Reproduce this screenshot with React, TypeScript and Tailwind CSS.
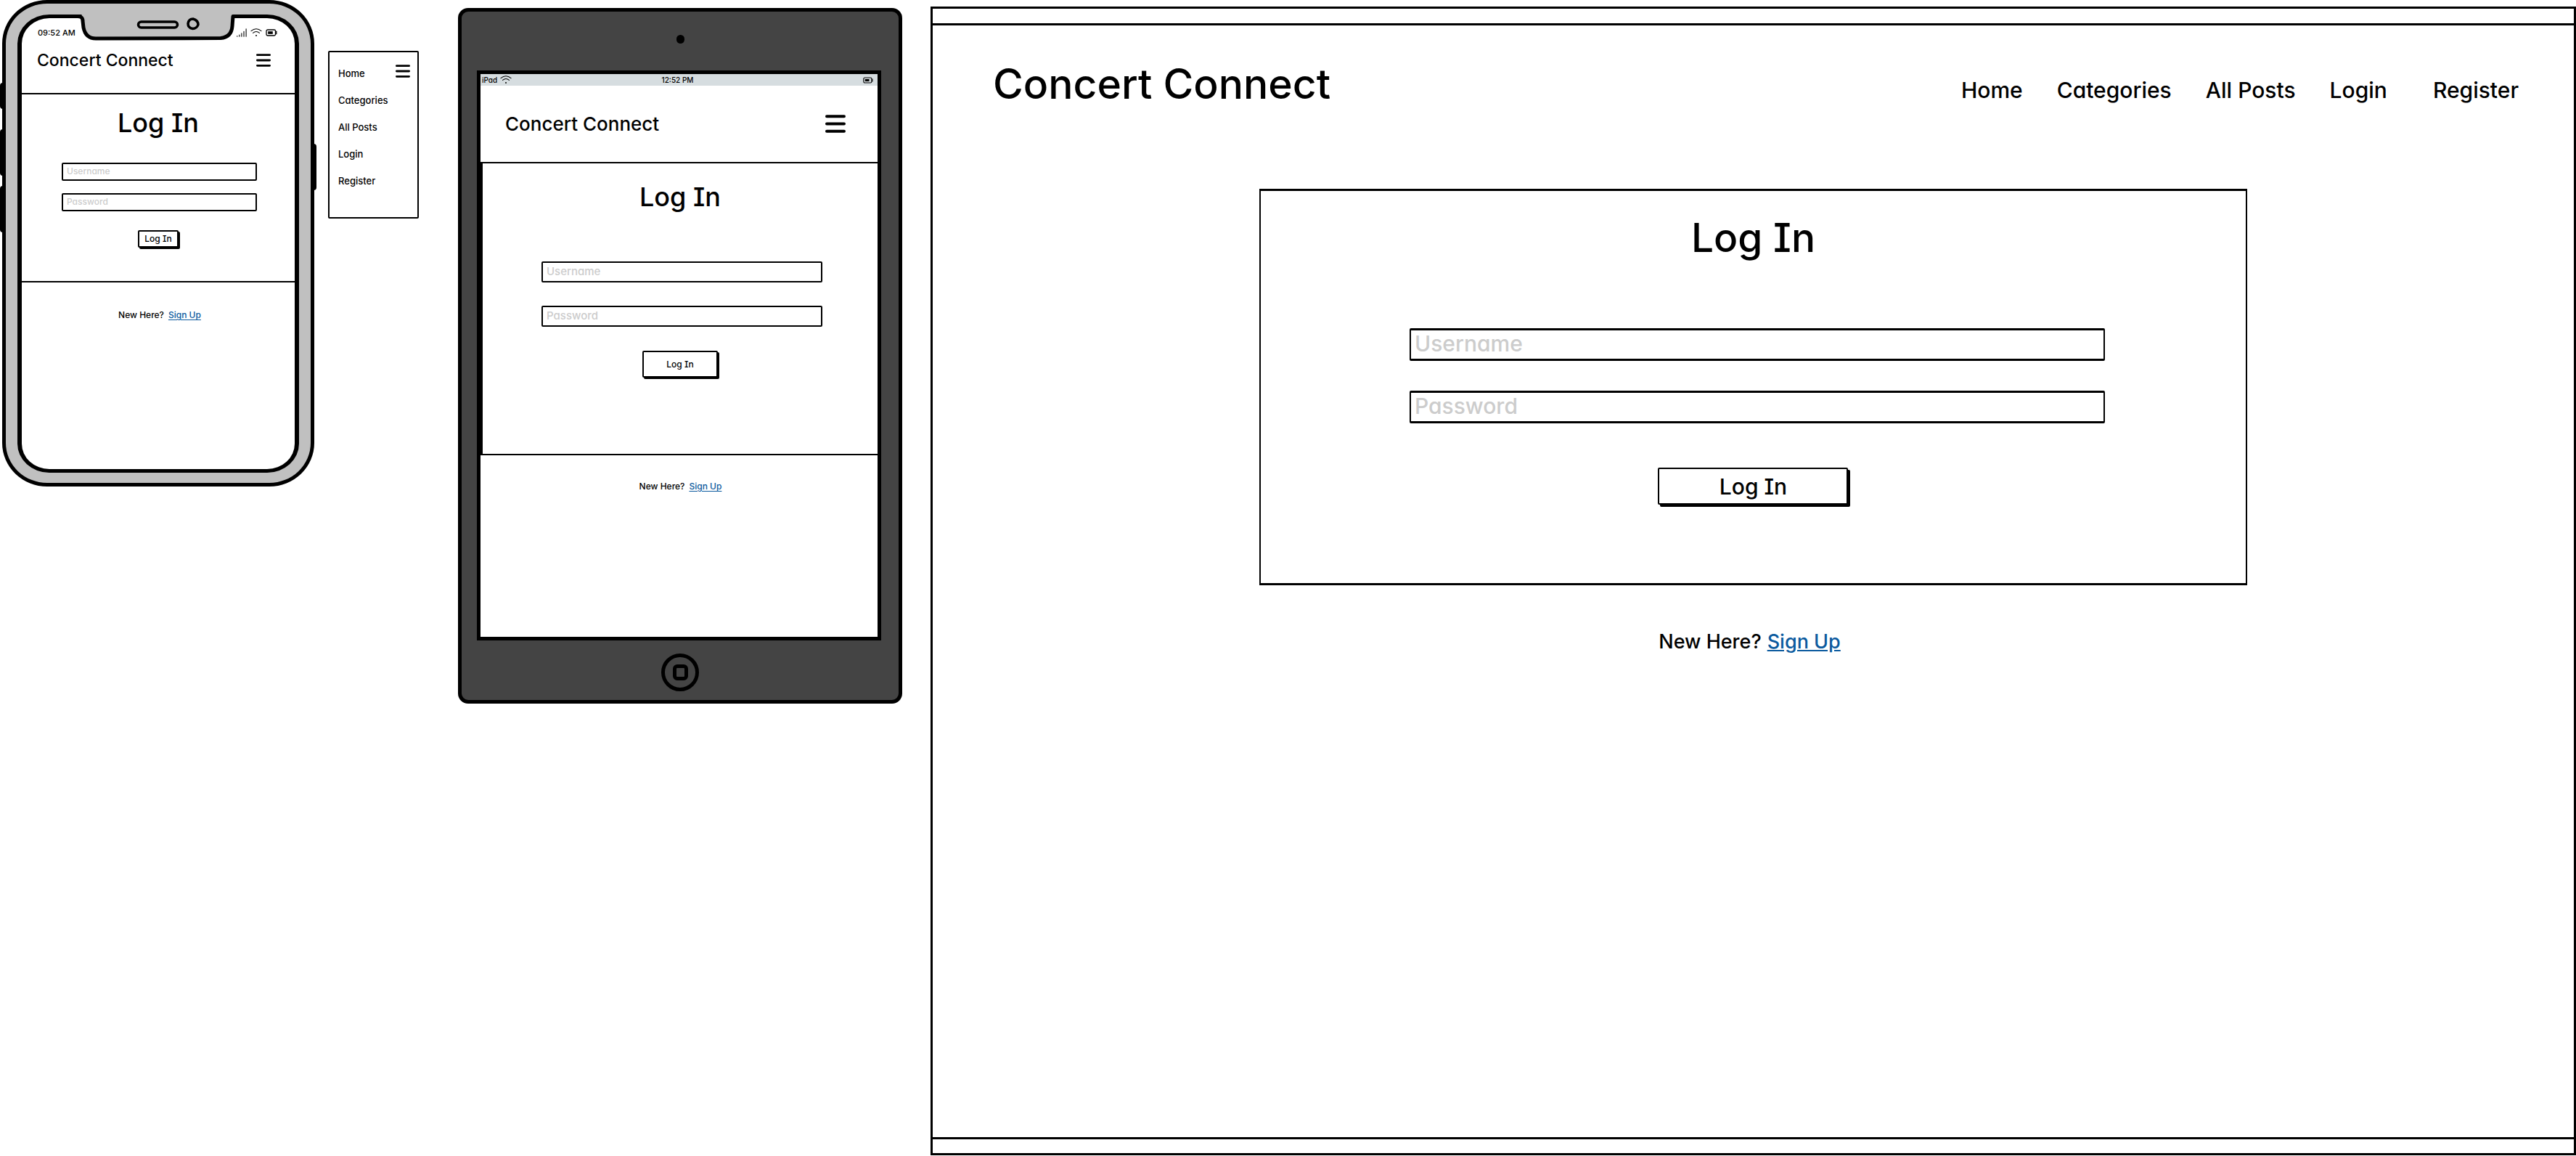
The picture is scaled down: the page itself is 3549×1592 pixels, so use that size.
const pages = ["Home", "Categories", "All Posts", "Login", "Register"];

function MenuIcon({ className }: { className: string }) {
  return (
    <svg viewBox="0 0 28 25" preserveAspectRatio="none" className={className} fill="none" stroke="currentColor" strokeWidth="4" strokeLinecap="round" aria-hidden="true">
      <path d="M2 2.3h24M2 12.5h24M2 22.7h24" />
    </svg>
  );
}

function WifiIcon({ className }: { className: string }) {
  return (
    <svg viewBox="0 0 16 12" className={className} fill="none" stroke="currentColor" strokeWidth="1.1" strokeLinecap="round" aria-hidden="true">
      <path d="M1 3.6Q8-2 15 3.6M3.6 6.4Q8 2.6 12.4 6.4" />
      <circle cx="8" cy="10" r="1" fill="currentColor" stroke="none" />
    </svg>
  );
}

function BatteryIcon({ className }: { className: string }) {
  return (
    <svg viewBox="0 0 16 10" className={className} fill="none" stroke="currentColor" strokeWidth="1.3" aria-hidden="true">
      <rect x="1" y="1" width="12.5" height="8" rx="1.8" />
      <path d="M14.8 3.2v3.6" strokeLinecap="round" />
      <rect x="3.2" y="3.2" width="6.6" height="3.6" fill="currentColor" stroke="none" />
    </svg>
  );
}

function SignalIcon({ className }: { className: string }) {
  return (
    <svg viewBox="0 0 14 12" className={className} fill="none" stroke="currentColor" strokeWidth="1.1" strokeLinecap="round" aria-hidden="true">
      <path d="M.8 10.6v.6M3.8 9v2.2M6.9 6.8v4.4M10 4.2v7M13.1.8v10.4" />
    </svg>
  );
}

function Field({ label, type, className }: { label: string; type: string; className: string }) {
  return (
    <input
      type={type}
      aria-label={label}
      placeholder={label}
      className={`block w-full rounded-[2px] border-black bg-white pb-0.5 font-medium outline-none placeholder:text-[#cccccc] placeholder:opacity-100 ${className}`}
    />
  );
}

function SignUpLine({ className }: { className: string }) {
  return (
    <p className={`flex justify-center font-medium ${className}`}>
      <span>New Here?</span>
      <a href="#sign-up" className="text-[#0b5a9e] underline underline-offset-2">Sign Up</a>
    </p>
  );
}

function Phone() {
  return (
    <section aria-label="Phone" className="relative flex min-h-[670px] w-[430px] shrink-0 flex-col rounded-[62px/60px] border-[5px] border-black bg-[#c0c0c0] px-4 pt-[15px] pb-3.5">
      <span className="absolute top-[109px] -left-2 h-9 w-1 rounded-l-sm bg-black" />
      <span className="absolute top-[173px] -left-2 h-16 w-1 rounded-l-sm bg-black" />
      <span className="absolute top-[251px] -left-2 h-16 w-1 rounded-l-sm bg-black" />
      <span className="absolute top-[193px] -right-2 h-16 w-1 rounded-r-sm bg-black" />
      <svg viewBox="104 17 226 42" className="absolute top-3 left-24 h-[42px] w-[226px]" aria-hidden="true">
        <path d="M112 17L114 30L115 38Q118 53 132 53L304 52.500Q319 51 320 36L321 17Z" fill="#c0c0c0" />
        <path d="M106 22.500Q114 22 114 29L115 38Q118 53 132 53L304 52.500Q319 51 320 36L321 22.500H326" fill="none" stroke="#000" strokeWidth="5" strokeLinejoin="round" />
        <rect x="190.500" y="30" width="54" height="8" rx="4" fill="none" stroke="#000" strokeWidth="3.500" />
        <path d="M266 26Q273 28 273 34Q271 39.500 265.500 39.500Q259 38.500 259 32.500Q260 26 266 26Z" fill="none" stroke="#000" strokeWidth="3.500" />
      </svg>
      <div className="flex flex-1 flex-col overflow-hidden rounded-[44px/40px] border-x-6 border-y-5 border-black bg-white">
        <div className="mt-2.5 flex h-5 items-center justify-between pr-6 pl-[22px] text-[11px] font-medium">
          <span>09:52 AM</span>
          <span className="flex items-center gap-[5px]">
            <SignalIcon className="h-3 w-3.5" />
            <WifiIcon className="h-3 w-4" />
            <BatteryIcon className="h-2.5 w-4" />
          </span>
        </div>
        <header className="flex items-center justify-between pt-3.5 pr-[33px] pb-[31px] pl-[21px]">
          <span className="text-[23px]/7 font-medium">Concert Connect</span>
          <button type="button" aria-label="Menu"><MenuIcon className="h-[18px] w-5" /></button>
        </header>
        <form className="flex flex-col items-center border-y-2 border-black px-[52px] pt-[19px] pb-[46px]">
          <h1 className="mb-[35px] text-4xl/10 font-medium">Log In</h1>
          <div className="mb-[26px] flex w-full flex-col gap-[17px] pl-[3px]">
            <Field label="Username" type="text" className="h-[25px] border-2 px-[5px] text-xs" />
            <Field label="Password" type="password" className="h-[25px] border-2 px-[5px] text-xs" />
          </div>
          <button type="button" className="h-6 w-14 rounded-[2px] border-2 border-black bg-white text-xs font-medium shadow-[2px_2px_0_#000]">Log In</button>
        </form>
        <SignUpLine className="mt-[37px] gap-1.5 pl-1 text-xs/4" />
      </div>
    </section>
  );
}

function PhoneMenu() {
  return (
    <nav aria-label="Phone menu" className="mt-[70px] ml-[19px] flex h-[231px] w-[125px] shrink-0 items-start justify-between rounded-[2px] border-2 border-black pt-[17px] pr-2.5 pl-3">
      <ul className="flex flex-col gap-[21px] pt-1 text-[13px]/4 font-medium">
        {pages.map((page) => (
          <li key={page}><a href="#page">{page}</a></li>
        ))}
      </ul>
      <button type="button" aria-label="Close menu"><MenuIcon className="h-[18px] w-5" /></button>
    </nav>
  );
}

function Tablet() {
  return (
    <section aria-label="Tablet" className="mt-[11px] ml-[54px] flex w-[612px] shrink-0 flex-col rounded-[14px] border-5 border-black bg-[#444444]">
      <div className="flex h-[81px] justify-center pt-8">
        <span className="h-3 w-[11px] rounded-full bg-black" />
      </div>
      <div className="mr-6 ml-[21px] flex min-h-[785px] flex-col border-5 border-black bg-white">
        <div className="grid h-4 grid-cols-3 items-center bg-[#d6dde0] pr-1.5 pl-0.5 text-[10px]/4 font-medium">
          <span className="flex items-center gap-1">iPad <WifiIcon className="h-3 w-4" /></span>
          <span className="text-center">12:52 PM</span>
          <BatteryIcon className="h-[9px] w-3.5 justify-self-end" />
        </div>
        <header className="flex h-[105px] items-center justify-between pr-11 pl-[34px]">
          <span className="text-[26px]/8 font-medium">Concert Connect</span>
          <button type="button" aria-label="Menu"><MenuIcon className="h-[25px] w-7" /></button>
        </header>
        <form className="flex flex-col items-center border-y-2 border-l-3 border-black px-[76px] pt-6 pb-[105px]">
          <h1 className="mb-[67px] text-4xl/[44px] font-medium">Log In</h1>
          <div className="mb-[33px] flex w-full flex-col gap-8 pl-[5px]">
            <Field label="Username" type="text" className="h-[29px] border-2 px-[5px] text-[15px]" />
            <Field label="Password" type="password" className="h-[29px] border-2 px-[5px] text-[15px]" />
          </div>
          <button type="button" className="h-[37px] w-26 rounded-[2px] border-2 border-black bg-white text-xs font-medium shadow-[2px_2px_0_#000]">Log In</button>
        </form>
        <SignUpLine className="mt-[35px] gap-1.5 pl-1 text-xs/4" />
      </div>
      <div className="flex h-[82px] justify-center pt-[18px]">
        <button type="button" aria-label="Home button" className="flex size-[52px] items-center justify-center rounded-full border-5 border-black">
          <span className="h-[22px] w-[21px] rounded-md border-5 border-black" />
        </button>
      </div>
    </section>
  );
}

function Desktop() {
  return (
    <section aria-label="Desktop" className="mt-[9px] mb-px ml-[39px] flex min-w-0 flex-1 flex-col self-stretch border-3 border-black">
      <div className="h-[23px] border-b-3 border-black" />
      <header className="flex items-end justify-between pt-[49px] pr-[76px] pl-[83px]">
        <span className="text-[57px]/16 font-medium">Concert Connect</span>
        <nav aria-label="Main">
          <ul className="flex gap-[47px] text-[30px]/12 font-medium">
            {pages.map((page) => (
              <li key={page} className="last:ml-4"><a href="#page">{page}</a></li>
            ))}
          </ul>
        </nav>
      </header>
      <main className="flex-1 pt-28">
        <form className="mx-auto flex w-[60.2%] flex-col items-center border-x-2 border-y-3 border-black px-[194px] pt-8 pb-[108px]">
          <h1 className="mb-[93px] text-[55px]/16 font-medium">Log In</h1>
          <div className="mb-[61px] flex w-full flex-col gap-[41px] pl-[11px]">
            <Field label="Username" type="text" className="h-[45px] border-x-2 border-y-3 px-[5px] text-[30px]" />
            <Field label="Password" type="password" className="h-[45px] border-x-2 border-y-3 px-[5px] text-[30px]" />
          </div>
          <button type="button" className="h-[51px] w-[262px] rounded-[2px] border-2 border-black bg-white text-[30px] leading-none font-medium shadow-[3px_3px_0_#000]">Log In</button>
        </form>
        <SignUpLine className="mt-[58px] gap-2 pr-2.5 text-[27px]/10" />
      </main>
      <div className="h-[22px] border-t-3 border-black" />
    </section>
  );
}

export default function App() {
  return (
    <div className="flex min-h-screen items-start bg-white pl-[3px] font-['Inter',sans-serif] text-black [font-feature-settings:'cv08','cv11']">
      <Phone />
      <PhoneMenu />
      <Tablet />
      <Desktop />
    </div>
  );
}
